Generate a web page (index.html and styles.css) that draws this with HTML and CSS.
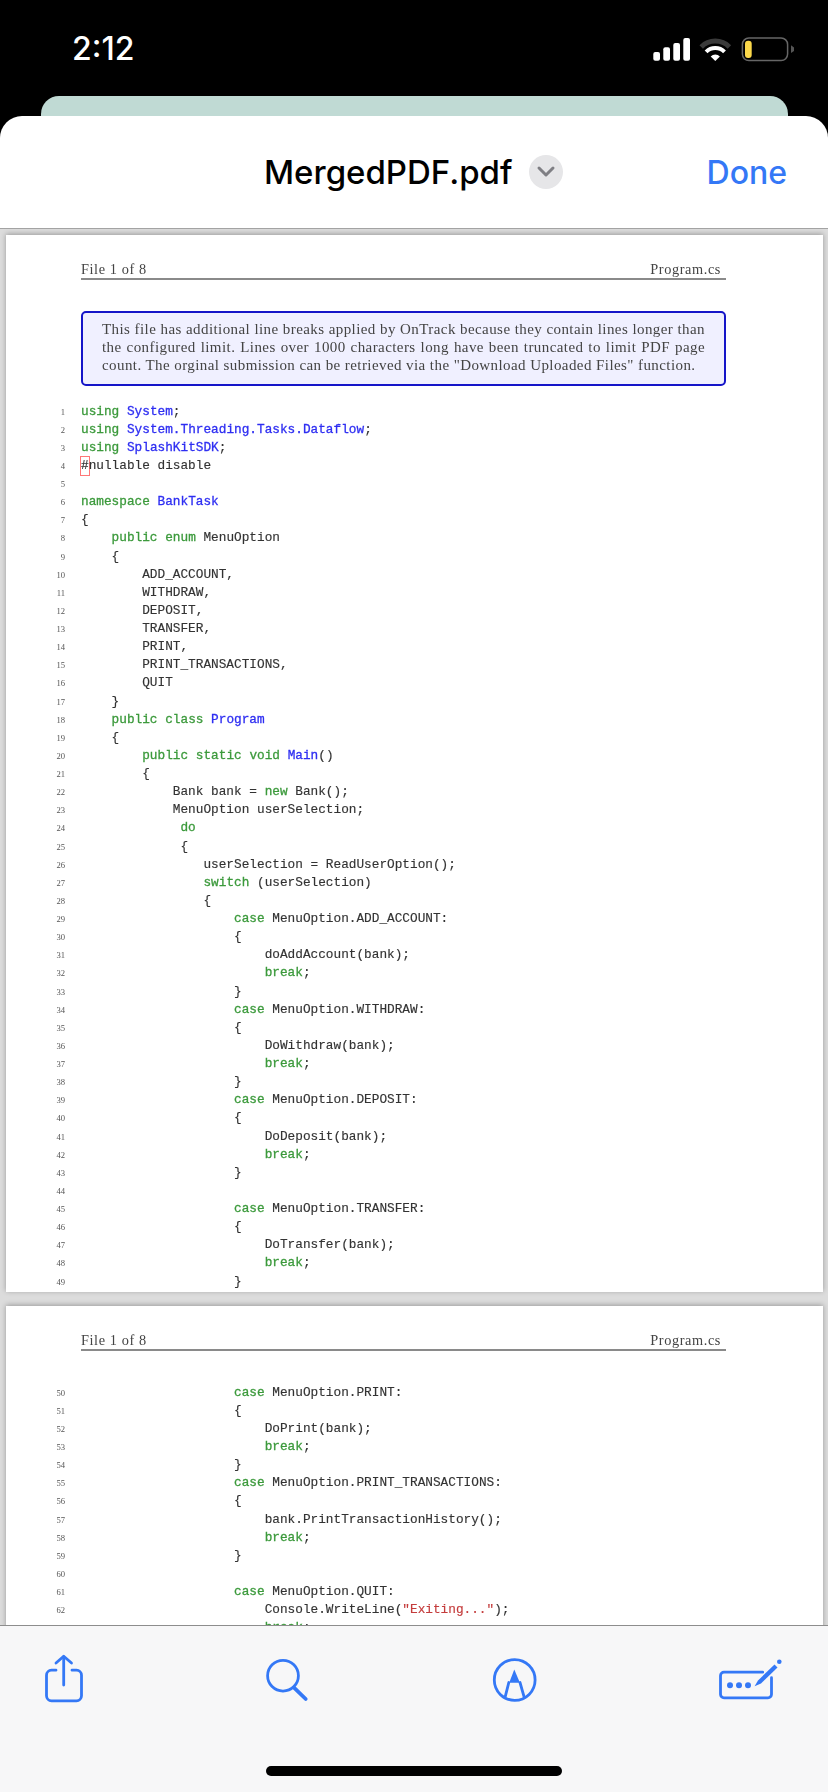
FILE: index.html
```html
<!DOCTYPE html>
<html lang="en">
<head>
<meta charset="utf-8">
<title>MergedPDF.pdf</title>
<link rel="stylesheet" href="styles.css">
</head>
<body>
<div class="phone">
  <div class="status">
    <span class="time">2:12</span>
    <svg class="status-icons" width="144" height="30" viewBox="652 34 144 30">
      <rect x="653.3" y="52" width="6.7" height="8.7" rx="2" fill="#fff"/>
      <rect x="663.3" y="47.3" width="6.7" height="13.4" rx="2" fill="#fff"/>
      <rect x="673.3" y="43" width="6.7" height="17.7" rx="2" fill="#fff"/>
      <rect x="683.3" y="38" width="6.7" height="22.7" rx="2" fill="#fff"/>
      <path d="M701.2 46.9A20 20 0 0 1 729.4 46.9" fill="none" stroke="#3a3a3a" stroke-width="5"/>
      <path d="M706.1 51.8A13 13 0 0 1 724.5 51.8" fill="none" stroke="#fff" stroke-width="4"/>
      <path d="M715.3 61L710.7 56.4A6.5 6.5 0 0 1 719.9 56.4Z" fill="#fff"/>
      <rect x="742.4" y="38" width="45.2" height="22.6" rx="6.5" fill="none" stroke="#666" stroke-width="1.5"/>
      <rect x="745" y="40.7" width="6.7" height="17.3" rx="3" fill="#fbd84a"/>
      <path d="M791 45.3L794 47.5V51L791 53Z" fill="#555"/>
    </svg>
  </div>
  <div class="peek"></div>
  <div class="sheet">
    <header class="nav">
      <span class="title">MergedPDF.pdf</span>
      <span class="chev">
        <svg width="20" height="14" viewBox="0 0 20 14"><path d="M3 3L10 10L17 3" fill="none" stroke="#7f7f84" stroke-width="3" stroke-linecap="round" stroke-linejoin="round"/></svg>
      </span>
      <span class="done">Done</span>
    </header>
    <main class="viewer">
      <section class="page page-first">
        <div class="pg-head"><span>File 1 of 8</span><span>Program.cs</span></div>
        <div class="note">
          <span class="note-line just">This file has additional line breaks applied by OnTrack because they contain lines longer than</span>
          <span class="note-line just">the configured limit. Lines over 1000 characters long have been truncated to limit PDF page</span>
          <span class="note-line last">count. The orginal submission can be retrieved via the "Download Uploaded Files" function.</span>
        </div>
        <div class="code code-first">
<div class="ln"><span class="n">1</span><span class="c"><b class="k">using</b> <b class="t">System</b>;</span></div>
<div class="ln"><span class="n">2</span><span class="c"><b class="k">using</b> <b class="t">System.Threading.Tasks.Dataflow</b>;</span></div>
<div class="ln"><span class="n">3</span><span class="c"><b class="k">using</b> <b class="t">SplashKitSDK</b>;</span></div>
<div class="ln"><span class="n">4</span><span class="c"><span class="err">#</span>nullable disable</span></div>
<div class="ln"><span class="n">5</span><span class="c"></span></div>
<div class="ln"><span class="n">6</span><span class="c"><b class="k">namespace</b> <b class="t">BankTask</b></span></div>
<div class="ln"><span class="n">7</span><span class="c">{</span></div>
<div class="ln"><span class="n">8</span><span class="c">    <b class="k">public</b> <b class="k">enum</b> MenuOption</span></div>
<div class="ln"><span class="n">9</span><span class="c">    {</span></div>
<div class="ln"><span class="n">10</span><span class="c">        ADD_ACCOUNT,</span></div>
<div class="ln"><span class="n">11</span><span class="c">        WITHDRAW,</span></div>
<div class="ln"><span class="n">12</span><span class="c">        DEPOSIT,</span></div>
<div class="ln"><span class="n">13</span><span class="c">        TRANSFER,</span></div>
<div class="ln"><span class="n">14</span><span class="c">        PRINT,</span></div>
<div class="ln"><span class="n">15</span><span class="c">        PRINT_TRANSACTIONS,</span></div>
<div class="ln"><span class="n">16</span><span class="c">        QUIT</span></div>
<div class="ln"><span class="n">17</span><span class="c">    }</span></div>
<div class="ln"><span class="n">18</span><span class="c">    <b class="k">public</b> <b class="k">class</b> <b class="t">Program</b></span></div>
<div class="ln"><span class="n">19</span><span class="c">    {</span></div>
<div class="ln"><span class="n">20</span><span class="c">        <b class="k">public</b> <b class="k">static</b> <b class="k">void</b> <b class="t">Main</b>()</span></div>
<div class="ln"><span class="n">21</span><span class="c">        {</span></div>
<div class="ln"><span class="n">22</span><span class="c">            Bank bank = <b class="k">new</b> Bank();</span></div>
<div class="ln"><span class="n">23</span><span class="c">            MenuOption userSelection;</span></div>
<div class="ln"><span class="n">24</span><span class="c">             <b class="k">do</b></span></div>
<div class="ln"><span class="n">25</span><span class="c">             {</span></div>
<div class="ln"><span class="n">26</span><span class="c">                userSelection = ReadUserOption();</span></div>
<div class="ln"><span class="n">27</span><span class="c">                <b class="k">switch</b> (userSelection)</span></div>
<div class="ln"><span class="n">28</span><span class="c">                {</span></div>
<div class="ln"><span class="n">29</span><span class="c">                    <b class="k">case</b> MenuOption.ADD_ACCOUNT:</span></div>
<div class="ln"><span class="n">30</span><span class="c">                    {</span></div>
<div class="ln"><span class="n">31</span><span class="c">                        doAddAccount(bank);</span></div>
<div class="ln"><span class="n">32</span><span class="c">                        <b class="k">break</b>;</span></div>
<div class="ln"><span class="n">33</span><span class="c">                    }</span></div>
<div class="ln"><span class="n">34</span><span class="c">                    <b class="k">case</b> MenuOption.WITHDRAW:</span></div>
<div class="ln"><span class="n">35</span><span class="c">                    {</span></div>
<div class="ln"><span class="n">36</span><span class="c">                        DoWithdraw(bank);</span></div>
<div class="ln"><span class="n">37</span><span class="c">                        <b class="k">break</b>;</span></div>
<div class="ln"><span class="n">38</span><span class="c">                    }</span></div>
<div class="ln"><span class="n">39</span><span class="c">                    <b class="k">case</b> MenuOption.DEPOSIT:</span></div>
<div class="ln"><span class="n">40</span><span class="c">                    {</span></div>
<div class="ln"><span class="n">41</span><span class="c">                        DoDeposit(bank);</span></div>
<div class="ln"><span class="n">42</span><span class="c">                        <b class="k">break</b>;</span></div>
<div class="ln"><span class="n">43</span><span class="c">                    }</span></div>
<div class="ln"><span class="n">44</span><span class="c"></span></div>
<div class="ln"><span class="n">45</span><span class="c">                    <b class="k">case</b> MenuOption.TRANSFER:</span></div>
<div class="ln"><span class="n">46</span><span class="c">                    {</span></div>
<div class="ln"><span class="n">47</span><span class="c">                        DoTransfer(bank);</span></div>
<div class="ln"><span class="n">48</span><span class="c">                        <b class="k">break</b>;</span></div>
<div class="ln"><span class="n">49</span><span class="c">                    }</span></div>
        </div>
      </section>
      <section class="page">
        <div class="pg-head"><span>File 1 of 8</span><span>Program.cs</span></div>
        <div class="code code-second">
<div class="ln"><span class="n">50</span><span class="c">                    <b class="k">case</b> MenuOption.PRINT:</span></div>
<div class="ln"><span class="n">51</span><span class="c">                    {</span></div>
<div class="ln"><span class="n">52</span><span class="c">                        DoPrint(bank);</span></div>
<div class="ln"><span class="n">53</span><span class="c">                        <b class="k">break</b>;</span></div>
<div class="ln"><span class="n">54</span><span class="c">                    }</span></div>
<div class="ln"><span class="n">55</span><span class="c">                    <b class="k">case</b> MenuOption.PRINT_TRANSACTIONS:</span></div>
<div class="ln"><span class="n">56</span><span class="c">                    {</span></div>
<div class="ln"><span class="n">57</span><span class="c">                        bank.PrintTransactionHistory();</span></div>
<div class="ln"><span class="n">58</span><span class="c">                        <b class="k">break</b>;</span></div>
<div class="ln"><span class="n">59</span><span class="c">                    }</span></div>
<div class="ln"><span class="n">60</span><span class="c"></span></div>
<div class="ln"><span class="n">61</span><span class="c">                    <b class="k">case</b> MenuOption.QUIT:</span></div>
<div class="ln"><span class="n">62</span><span class="c">                        Console.WriteLine(<span class="s">"Exiting..."</span>);</span></div>
<div class="ln"><span class="n">63</span><span class="c">                        <b class="k">break</b>;</span></div>
        </div>
      </section>
    </main>
    <footer class="toolbar">
      <div class="tools">
        <svg width="40" height="50" viewBox="0 0 40 50" class="ic"><path d="M12 16.2H7.5a5 5 0 0 0-5 5v20.6a5 5 0 0 0 5 5h25a5 5 0 0 0 5-5V21.2a5 5 0 0 0-5-5H28"/><path d="M19.7 31V3"/><path d="M12 9L19.7 2.2L27.5 9"/></svg>
        <svg width="48" height="50" viewBox="0 0 48 50" class="ic"><circle cx="20" cy="21.7" r="15.4"/><path d="M31 33.7L42.7 45" stroke-width="3.8"/></svg>
        <svg width="48" height="50" viewBox="0 0 48 50" class="ic"><circle cx="23.7" cy="26" r="20.4"/><path class="fill" d="M23.3 15.5L18.2 28.8H28.9Z"/><path d="M17.8 28.5L14 43.7M29 28.5L33.3 43.7"/></svg>
        <svg width="66" height="50" viewBox="0 0 66 50" class="ic"><path d="M44.7 18.2H6a3.5 3.5 0 0 0-3.5 3.5V40.3a3.5 3.5 0 0 0 3.5 3.5H50a3.5 3.5 0 0 0 3.5-3.5V23.7"/><circle class="fill" cx="12" cy="31.3" r="3"/><circle class="fill" cx="21" cy="31.3" r="3"/><circle class="fill" cx="30" cy="31.3" r="3"/><path class="fill" d="M36.6 32.2L40 26.5L56.5 10.5L59.5 13.5L43 29.5Z"/><circle class="fill" cx="61.3" cy="7.7" r="2.3"/></svg>
      </div>
      <div class="home"></div>
    </footer>
  </div>
</div>
</body>
</html>
```

FILE: styles.css
```css
* { box-sizing: border-box; }
html, body { margin: 0; padding: 0; background: #000; }
.phone {
  width: 828px;
  height: 1792px;
  background: #000;
  display: flex;
  flex-direction: column;
  overflow: hidden;
}
.status {
  height: 96px;
  flex: none;
  display: flex;
  justify-content: space-between;
  align-items: flex-start;
  padding: 0 32px 0 72px;
}
.time {
  font: 500 32px/34px Inter, "Liberation Sans", sans-serif;
  color: #fff;
  margin-top: 32px;
}
.status-icons { margin-top: 34px; }
.peek {
  flex: none;
  height: 20px;
  width: 747px;
  margin-left: 41px;
  background: #c0dad4;
  border-radius: 18px 18px 0 0;
}
.sheet {
  flex: 1;
  min-height: 0;
  display: flex;
  flex-direction: column;
  background: #fff;
  border-radius: 22px 22px 0 0;
  overflow: hidden;
}
.nav {
  flex: none;
  height: 113px;
  display: flex;
  align-items: center;
  padding: 0 41px 0 264px;
  border-bottom: 1px solid #a3a3a3;
  font-family: Inter, "Liberation Sans", sans-serif;
}
.title { font-size: 33px; font-weight: 500; color: #000; }
.chev {
  width: 34px;
  height: 34px;
  margin-left: 16px;
  border-radius: 50%;
  background: #e6e6e8;
  display: flex;
  align-items: center;
  justify-content: center;
}
.done { margin-left: auto; font-size: 32px; font-weight: 500; color: #3478f6; }
.viewer {
  flex: 1;
  min-height: 0;
  overflow: hidden;
  background: #dcdcdc;
  padding: 6px 5px 0 6px;
}
.page {
  background: #fff;
  box-shadow: 0 -1px 5px rgba(0, 0, 0, .3);
  padding: 26px 97px 0 0;
  filter: blur(.35px);
}
.page-first { height: 1057px; margin-bottom: 14px; }
.pg-head {
  margin-left: 75px;
  height: 19px;
  display: flex;
  justify-content: space-between;
  padding-right: 5px;
  border-bottom: 2px solid #8a8a8a;
  font: 14.3px/17px "Liberation Serif", serif;
  letter-spacing: .6px;
  color: #444;
}
.note {
  margin: 31px 0 0 75px;
  height: 75px;
  padding: 7px 19px 0;
  background: #f0f0ff;
  border: 2px solid #1515c8;
  border-radius: 5px;
  font: 15px/18.2px "Liberation Serif", serif;
  letter-spacing: .42px;
  color: #444;
}
.note-line { display: block; white-space: nowrap; }
.just { text-align: justify; text-align-last: justify; white-space: normal; }
.code {
  font: 12.75px/18.13px "Liberation Mono", monospace;
  color: #333;
  -webkit-text-stroke: .15px #333;
}
.code-first { margin-top: 16.6px; }
.code-second { margin-top: 32.7px; }
.ln { display: flex; height: 18.13px; white-space: pre; }
.n {
  flex: none;
  width: 59px;
  margin-right: 16px;
  text-align: right;
  font: 8.6px/18.13px "Liberation Serif", serif;
  color: #555;
  -webkit-text-stroke: 0;
}
.c { flex: 1; }
.k { font-weight: 400; color: #3c9a3c; -webkit-text-stroke: .3px #3c9a3c; }
.t { font-weight: 400; color: #2e2ef2; -webkit-text-stroke: .3px #2e2ef2; }
.s { color: #c43c3c; -webkit-text-stroke: .15px #c43c3c; }
.err { display: inline-block; height: 18px; color: #222; outline: 1px solid #f77; }
.toolbar {
  flex: none;
  height: 167px;
  background: #f7f7f8;
  border-top: 1px solid #8d8d8d;
  padding-top: 28px;
}
.tools {
  display: flex;
  justify-content: space-between;
  padding: 0 44px;
}
.ic { fill: none; stroke: #3478f6; stroke-width: 2.8; stroke-linecap: round; stroke-linejoin: round; }
.ic .fill { fill: #3478f6; stroke: none; }
.home {
  width: 296px;
  height: 10px;
  margin: 62px auto 0;
  background: #000;
  border-radius: 5px;
}
```
